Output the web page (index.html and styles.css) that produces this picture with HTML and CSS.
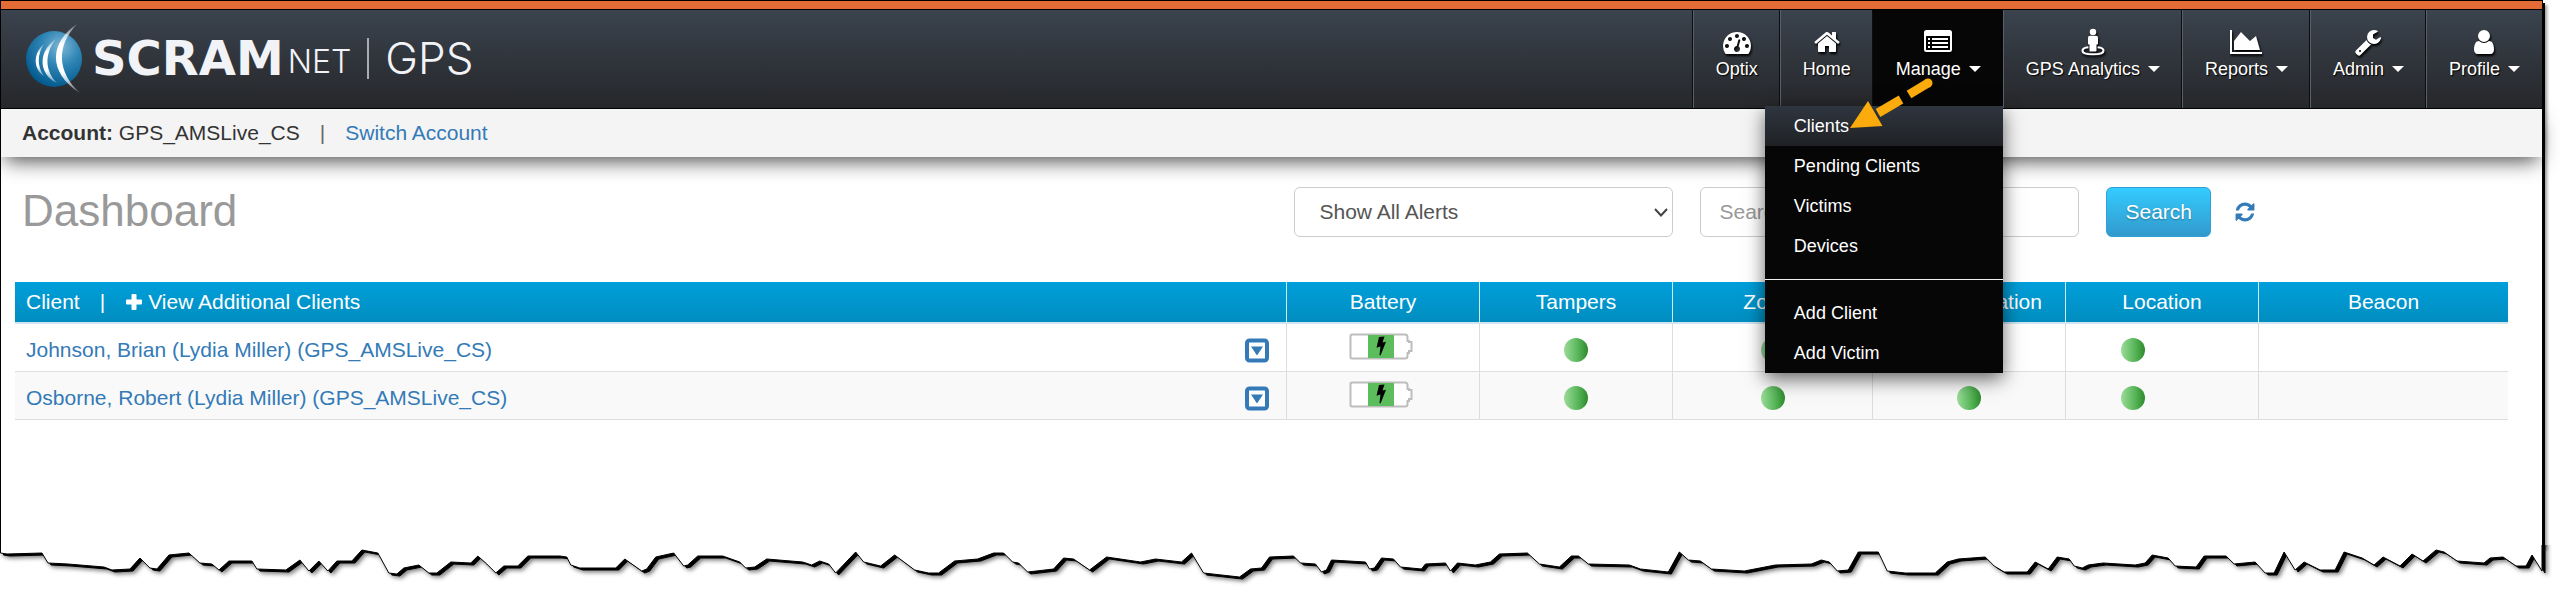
FILE: index.html
```html
<!DOCTYPE html>
<html lang="en">
<head>
<meta charset="utf-8">
<title>SCRAMnet GPS - Dashboard</title>
<link rel="stylesheet" href="styles.css">
</head>
<body>
<svg class="defs" aria-hidden="true">
  <defs>
    <radialGradient id="globe" cx="62%" cy="28%" r="75%">
      <stop offset="0" stop-color="#7fb6d6"/><stop offset=".45" stop-color="#2f86b5"/><stop offset="1" stop-color="#01588c"/>
    </radialGradient>
    <linearGradient id="swoosh" x1="0" y1="0" x2="0" y2="1">
      <stop offset="0" stop-color="#fff" stop-opacity=".3"/><stop offset=".3" stop-color="#fff"/><stop offset=".7" stop-color="#fff"/><stop offset="1" stop-color="#fff" stop-opacity=".3"/>
    </linearGradient>
    <symbol id="battery" viewBox="0 0 64 27">
      <path d="M3 1.500H56Q58.500 1.500 58.500 4V8H60V9H62.500V18H60V20H58.500V23Q58.500 25.500 56 25.500H3Q1.500 25.500 1.500 24V3Q1.500 1.500 3 1.500Z" fill="#fff" stroke="#bdbdbd" stroke-width="2"/>
      <rect x="19" y="2" width="26" height="23" fill="#5bbd5b"/>
      <path d="M30 4L35.500 3.500L33.500 9.500L37 8.800L31.500 22.500L30.500 22L31.500 13.500L27.500 14.800Z" fill="#000"/>
    </symbol>
    <symbol id="expand" viewBox="0 0 24 25">
      <rect x="2" y="2.500" width="20" height="20" rx="2.500" fill="#fff" stroke="#337ab7" stroke-width="4"/>
      <path d="M6 8.500H18L12 17.500Z" fill="#337ab7"/>
    </symbol>
  </defs>
</svg>

<div class="page">
  <div class="accent"></div>
  <header class="topbar">
    <a class="brand" href="#">
      <svg class="brand-mark" width="62" height="72" viewBox="0 0 62 72" aria-hidden="true">
        <circle cx="30" cy="37" r="28" fill="url(#globe)"/>
        <path d="M20 22C9 31 9 47 20 54C13 45 13 32 20 22Z" fill="url(#swoosh)"/>
        <path d="M32 17C14 29 14 52 33 61C21 49 20 32 32 17Z" fill="url(#swoosh)"/>
        <path d="M53 2C26 20 23 50 56 71C33 50 32 24 53 2Z" fill="url(#swoosh)"/>
      </svg>
      <span class="brand-scram">SCRAM</span><span class="brand-net">NET</span>
      <span class="brand-rule"></span>
      <span class="brand-gps">GPS</span>
    </a>
    <nav class="nav">
      <a class="nav-item" href="#">
        <svg class="nav-icon" viewBox="0 0 1792 1792" aria-hidden="true"><path d="M384 1152q0-53-37.500-90.500t-90.500-37.500-90.500 37.500-37.500 90.500 37.500 90.500 90.500 37.500 90.500-37.500 37.500-90.500zm192-448q0-53-37.500-90.500t-90.500-37.500-90.500 37.500-37.500 90.500 37.500 90.500 90.500 37.500 90.500-37.500 37.500-90.500zm428 481l101-382q6-26-7.500-48.500t-38.500-29.500-48 6.500-30 39.500l-101 382q-60 5-107 43.500t-63 98.500q-20 77 20 146t117 89 146-20 89-117q16-60-6-117t-72-91zm660-33q0-53-37.500-90.500t-90.500-37.500-90.500 37.500-37.500 90.500 37.500 90.500 90.500 37.500 90.500-37.500 37.500-90.500zm-640-640q0-53-37.500-90.500t-90.500-37.500-90.500 37.500-37.500 90.500 37.500 90.500 90.500 37.500 90.500-37.500 37.500-90.500zm448 192q0-53-37.500-90.500t-90.500-37.500-90.500 37.500-37.500 90.500 37.500 90.500 90.500 37.500 90.500-37.500 37.500-90.500zm320 448q0 261-141 483-19 29-54 29h-1402q-35 0-54-29-141-221-141-483 0-182 71-348t191-286 286-191 348-71 348 71 286 191 191 286 71 348z"/></svg>
        <span class="nav-label">Optix</span>
      </a>
      <a class="nav-item" href="#">
        <svg class="nav-icon" viewBox="0 0 1792 1792" aria-hidden="true"><path d="M1472 992v480q0 26-19 45t-45 19h-384v-384h-256v384h-384q-26 0-45-19t-19-45v-480q0-1 .5-3t.5-3l575-474 575 474q1 2 1 6zm223-69l-62 74q-8 9-21 11h-3q-13 0-21-7l-692-577-692 577q-12 8-24 7-13-2-21-11l-62-74q-8-10-7-23.500t11-21.500l719-599q32-26 76-26t76 26l244 204v-195q0-14 9-23t23-9h192q14 0 23 9t9 23v408l219 182q10 8 11 21.500t-7 23.500z"/></svg>
        <span class="nav-label">Home</span>
      </a>
      <div class="nav-group">
        <a class="nav-item nav-item-open" href="#" aria-expanded="true">
          <svg class="nav-icon" viewBox="0 0 1792 1792" aria-hidden="true"><path fill-rule="evenodd" d="M160 128H1632Q1792 128 1792 288V1376Q1792 1536 1632 1536H160Q0 1536 0 1376V288Q0 128 160 128ZM160 512Q128 512 128 544V1376Q128 1408 160 1408H1632Q1664 1408 1664 1376V544Q1664 512 1632 512ZM256 640H384V768H256ZM512 640H1536V768H512ZM256 896H384V1024H256ZM512 896H1536V1024H512ZM256 1152H384V1280H256ZM512 1152H1536V1280H512Z"/></svg>
          <span class="nav-label">Manage<i class="caret"></i></span>
        </a>
        <div class="menu">
          <a class="menu-item menu-item-active" href="#">Clients</a>
          <a class="menu-item" href="#">Pending Clients</a>
          <a class="menu-item" href="#">Victims</a>
          <a class="menu-item" href="#">Devices</a>
          <hr class="menu-rule">
          <a class="menu-item" href="#">Add Client</a>
          <a class="menu-item" href="#">Add Victim</a>
        </div>
        <svg class="pointer" width="90" height="56" viewBox="0 0 90 56" aria-hidden="true">
          <path d="M80 8L61 19.500" stroke="#fbab0b" stroke-width="9" fill="none"/>
          <circle cx="80" cy="8" r="4.500" fill="#fbab0b"/>
          <path d="M53 24.500L30 38" stroke="#fbab0b" stroke-width="9" fill="none"/>
          <path d="M2 53L20 26L34.500 51Z" fill="#fbab0b"/>
        </svg>
      </div>
      <a class="nav-item" href="#">
        <svg class="nav-icon" viewBox="0 0 1792 1792" aria-hidden="true"><circle cx="896" cy="256" r="210"/><path d="M700 500H1092Q1216 500 1216 630V1010Q1216 1060 1160 1060H1120V1440Q1120 1500 1060 1500H732Q672 1500 672 1440V1060H632Q576 1060 576 1010V630Q576 500 700 500Z"/><path d="M600 1236C320 1270 224 1350 224 1450C224 1590 500 1680 896 1680S1568 1590 1568 1450C1568 1350 1472 1270 1192 1236" fill="none" stroke="#fff" stroke-width="135"/></svg>
        <span class="nav-label">GPS Analytics<i class="caret"></i></span>
      </a>
      <a class="nav-item" href="#">
        <svg class="nav-icon nav-icon-wide" viewBox="0 0 2048 1792" aria-hidden="true"><path d="M2048 1536v128h-2048v-1536h128v1408h1920zm-384-1024l256 896h-1664v-576l448-576 576 576z"/></svg>
        <span class="nav-label">Reports<i class="caret"></i></span>
      </a>
      <a class="nav-item" href="#">
        <svg class="nav-icon" viewBox="0 0 1792 1792" aria-hidden="true"><path d="M448 1472q0-26-19-45t-45-19-45 19-19 45 19 45 45 19 45-19 19-45zm644-420l-682 682q-37 37-90 37-52 0-91-37l-106-108q-38-36-38-90 0-53 38-91l681-681q39 98 114.500 173.500t173.500 114.500zm634-435q0 39-23 106-47 134-164.500 217.500t-258.500 83.500q-185 0-316.500-131.500t-131.500-316.500 131.500-316.500 316.500-131.500q58 0 121.500 16.500t107.500 46.500q16 11 16 28t-16 28l-293 169v224l193 107q5-3 79-48.500t135.500-81 70.500-35.500q15 0 23.500 10t8.500 25z"/></svg>
        <span class="nav-label">Admin<i class="caret"></i></span>
      </a>
      <a class="nav-item" href="#">
        <svg class="nav-icon" viewBox="0 0 1792 1792" aria-hidden="true"><path d="M1536 1399q0 109-62.500 187t-150.500 78h-854q-88 0-150.500-78t-62.500-187q0-85 8.500-160.500t31.500-152 58.500-131 94-89 134.500-34.500q131 128 313 128t313-128q76 0 134.500 34.500t94 89 58.500 131 31.500 152 8.500 160.500zm-256-887q0 159-112.500 271.500t-271.500 112.500-271.500-112.500-112.500-271.500 112.500-271.500 271.500-112.500 271.500 112.500 112.500 271.500z"/></svg>
        <span class="nav-label">Profile<i class="caret"></i></span>
      </a>
    </nav>
  </header>

  <div class="account">
    <span><b>Account:</b> GPS_AMSLive_CS</span>
    <span class="account-sep">|</span>
    <a class="link" href="#">Switch Account</a>
  </div>

  <main class="main">
    <div class="tools">
      <h1 class="title">Dashboard</h1>
      <div class="select-box">
        <select class="field select" aria-label="Alert filter"><option>Show All Alerts</option></select>
        <svg class="chevron" width="14" height="9" viewBox="0 0 14 9" aria-hidden="true"><path d="M1 1L7 7.500L13 1" fill="none" stroke="#444" stroke-width="2"/></svg>
      </div>
      <input class="field" type="text" placeholder="Search" aria-label="Search clients">
      <button class="search" type="button">Search</button>
      <a class="refresh" href="#" aria-label="Refresh"><svg width="22" height="22" viewBox="0 0 1792 1792" aria-hidden="true"><path fill="#337ab7" d="M1639 1056q0 5-1 7-64 268-268 434.500t-478 166.500q-146 0-282.500-55t-243.500-157l-129 129q-19 19-45 19t-45-19-19-45v-448q0-26 19-45t45-19h448q26 0 45 19t19 45-19 45l-137 137q71 66 161 102t187 36q134 0 250-65t186-179q11-17 53-117 8-23 30-23h192q13 0 22.500 9.500t9.500 22.500zm25-800v448q0 26-19 45t-45 19h-448q-26 0-45-19t-19-45 19-45l138-138q-148-137-349-137-134 0-250 65t-186 179q-11 17-53 117-8 23-30 23h-199q-13 0-22.500-9.500t-9.500-22.500v-7q65-268 270-434.500t480-166.500q146 0 284 55.500t245 156.500l130-129q19-19 45-19t45 19 19 45z"/></svg></a>
    </div>

    <table class="grid">
      <colgroup><col><col class="c-std"><col class="c-std"><col class="c-comm"><col class="c-std"><col class="c-std"><col class="c-beacon"></colgroup>
      <thead>
        <tr>
          <th class="client" scope="col"><div class="client-head"><span>Client</span><span>|</span><a class="add" href="#"><svg width="18" height="18" viewBox="0 0 18 18" aria-hidden="true"><path d="M7.500 1H10.500Q11.500 1 11.500 2V6.500H16Q17 6.500 17 7.500V10.500Q17 11.500 16 11.500H11.500V16Q11.500 17 10.500 17H7.500Q6.500 17 6.500 16V11.500H2Q1 11.500 1 10.500V7.500Q1 6.500 2 6.500H6.500V2Q6.500 1 7.500 1Z" fill="#fff"/></svg>View Additional Clients</a></div></th>
          <th scope="col">Battery</th><th scope="col">Tampers</th><th scope="col">Zones</th><th scope="col">Communication</th><th scope="col">Location</th><th scope="col">Beacon</th>
        </tr>
      </thead>
      <tbody>
        <tr>
          <td class="client"><div class="client-cell"><a class="link" href="#">Johnson, Brian (Lydia Miller) (GPS_AMSLive_CS)</a><button class="expand" type="button" aria-label="Show details"><svg width="24" height="25"><use href="#expand"/></svg></button></div></td>
          <td class="battery"><svg width="64" height="27"><use href="#battery"/></svg></td>
          <td><span class="dot"></span></td><td><span class="dot"></span></td><td><span class="dot"></span></td><td class="location"><span class="dot"></span></td><td></td>
        </tr>
        <tr>
          <td class="client"><div class="client-cell"><a class="link" href="#">Osborne, Robert (Lydia Miller) (GPS_AMSLive_CS)</a><button class="expand" type="button" aria-label="Show details"><svg width="24" height="25"><use href="#expand"/></svg></button></div></td>
          <td class="battery"><svg width="64" height="27"><use href="#battery"/></svg></td>
          <td><span class="dot"></span></td><td><span class="dot"></span></td><td><span class="dot"></span></td><td class="location"><span class="dot"></span></td><td></td>
        </tr>
      </tbody>
    </table>
  </main>
</div>
<svg class="torn" viewBox="0 0 2544 45" preserveAspectRatio="none" aria-hidden="true">
  <path class="torn-edge" d="M.5 -14V8L7 9L42 8L48 18L68 19L104 22L112 25L130 24L140 13L150 23L157 24L169 10L189 8L200 18L212 19L219 25L229 16L252 16L257 24L286 25L300 15L309 26L319 16L328 26L337 16L352 16L362 5L378 8L389 28L397 29L404 23L419 20L429 28L437 28L451 17L471 18L478 11L487 19L496 28L504 21L518 21L528 11L560 11L567 12L571 20L580 23L616 23L625 14L642 26L647 24L656 12L674 8L684 21L688 20L698 11L723 11L740 17L746 23L755 22L767 14L803 17L812 20L820 16L829 19L836 28L856 7L864 17L881 21L895 10L915 25L929 28L939 28L955 16L978 14L994 8L1004 8L1013 17L1019 18L1028 27L1054 24L1064 13L1074 14L1090 25L1107 12L1141 17L1156 14L1182 17L1192 8L1204 28L1240 32L1251 24L1262 23L1270 12L1294 11L1301 18L1316 19L1322 27L1327 25L1332 15L1366 17L1370 24L1375 23L1382 13L1394 14L1401 22L1422 24L1426 19L1446 18L1451 26L1458 18L1476 20L1491 17L1500 9L1528 8L1540 19L1560 22L1572 11L1579 11L1589 19L1630 20L1641 24L1669 27L1680 7L1689 15L1701 16L1712 24L1745 26L1776 20L1812 19L1822 15L1830 17L1838 26L1849 25L1859 7L1879 7L1888 26L1906 28L1936 28L1948 17L1959 14L1986 12L1995 21L2005 27L2028 27L2036 17L2049 24L2058 12L2070 14L2075 21L2083 23L2089 20L2104 18L2136 20L2146 18L2153 10L2169 13L2176 21L2197 22L2205 11L2227 11L2235 19L2256 17L2266 28L2275 28L2285 7L2296 25L2305 17L2321 25L2336 25L2345 7L2363 13L2375 20L2384 12L2401 21L2413 9L2424 16L2437 5L2445 7L2458 16L2485 18L2491 13L2504 12L2517 21L2527 21L2533 10L2543 26V-14"/>
</svg>
</body>
</html>
```
FILE: styles.css
```css
* { box-sizing: border-box; }

body {
  margin: 0;
  padding: 0 17px 8px 0;
  min-height: 100vh;
  display: flex;
  flex-direction: column;
  background: #fff;
  color: #333;
  font: 21px/24px "Liberation Sans", Arial, sans-serif;
}

a { color: inherit; text-decoration: none; }
.link { color: #337ab7; }
.defs { position: absolute; width: 0; height: 0; }

.page {
  flex: 1;
  border: 1px solid #000;
  border-bottom: 0;
  box-shadow: 2px 3px 0 #000, 4px 5px 3px rgba(0, 0, 0, .4);
  background: #fff;
}

.accent { height: 9px; background: #e36c36; border-bottom: 1px solid #000; }

/* Header */
.topbar {
  position: relative;
  z-index: 2;
  display: flex;
  justify-content: space-between;
  height: 99px;
  border-bottom: 1px solid #000;
  background: linear-gradient(#3a434e, #26272a);
}

.brand { display: flex; align-items: center; padding: 0 0 2px 23px; color: #f2f3f6; line-height: 48px; font-family: Inter, sans-serif; }
.brand-mark { margin-right: 6px; }
.brand-scram { font-family: "DejaVu Sans", sans-serif; font-size: 48px; font-weight: 700; }
.brand-net { font-size: 32px; font-weight: 300; padding: 8px 0 0 4px; }
.brand-rule { width: 2px; height: 41px; margin: 0 16px; background: #a9adb3; }
.brand-gps { font-size: 44px; font-weight: 300; }

.nav { display: flex; }
.nav-group { position: relative; display: flex; }
.nav-item {
  display: flex;
  flex-direction: column;
  align-items: center;
  gap: 3px;
  padding: 18px 22px 0;
  border-left: 1px solid #5a6069;
  box-shadow: -1px 0 0 #0c0d0f;
  color: #fff;
  font-size: 18px;
  line-height: 20px;
  text-shadow: 1px 1px 1px #000;
}
.nav-item-open { background: #060606; border-color: #060606; }
.nav-icon { width: 28px; height: 28px; fill: #fff; overflow: visible; filter: drop-shadow(1px 2px 1px #000); }
.nav-icon-wide { width: 32px; }
.nav-label { display: flex; align-items: center; gap: 8px; }
.caret { border: 6px solid transparent; border-top-color: #fff; border-bottom: 0; }

.menu {
  position: absolute;
  top: 96px;
  right: 0;
  width: 238px;
  background: #060606;
  box-shadow: 0 6px 18px rgba(0, 0, 0, .6);
}
.menu-item { display: block; padding: 0 29px; color: #fff; font-size: 18px; line-height: 40px; }
.menu-item-active { background: linear-gradient(#2f3640, #1f2124); }
.menu-rule { margin: 13px 0; border: 0; height: 1px; background: #f0f0f0; }
.pointer { position: absolute; top: 65px; right: 65px; }

/* Account strip */
.account {
  position: relative;
  display: flex;
  height: 48px;
  align-items: center;
  padding: 0 21px;
  background: #f4f4f4;
  box-shadow: 0 8px 20px -4px rgba(0, 0, 0, .7);
}
.account-sep { padding: 0 20px; color: #666; }

/* Dashboard */
.main { padding: 30px 34px 0 14px; }
.tools { display: flex; align-items: center; gap: 27px; padding-right: 252px; margin-bottom: 45px; }
.title { flex: 1; margin: 0 0 0 7px; padding-bottom: 2px; color: #999; font-size: 44px; line-height: 48px; font-weight: 400; }
.field {
  width: 379px;
  height: 50px;
  padding: 0 18px;
  border: 1px solid #ccc;
  border-radius: 6px;
  background: #fff;
  color: #555;
  font: inherit;
}
.field::placeholder { color: #999; opacity: 1; }
.select-box { position: relative; }
.select { display: block; padding: 0 24px; appearance: none; }
.chevron { position: absolute; right: 5px; top: 21px; pointer-events: none; }
.search {
  height: 50px;
  padding: 0 18px;
  border: 1px solid #2f9fd6;
  border-radius: 6px;
  background: linear-gradient(#33ccff, #3399cc);
  color: #fff;
  font: inherit;
  text-shadow: 0 1px 2px rgba(0, 0, 0, .3);
}
.refresh { display: flex; margin-left: -4px; }

.grid { width: 100%; table-layout: fixed; border-collapse: separate; border-spacing: 0; }
.c-std { width: 193px; }
.c-comm { width: 200px; }
.c-beacon { width: 250px; }
.grid th {
  height: 42px;
  padding: 0;
  border-left: 1px solid #cfe9f5;
  border-bottom: 2px solid #cfe6f0;
  background: linear-gradient(#009fdb, #018dbf);
  color: #fff;
  font-weight: 400;
}
.grid .client { padding: 0 17px 0 11px; border-left: 0; text-align: left; }
.client-head { display: flex; gap: 20px; }
.add { display: flex; align-items: center; gap: 5px; }
.grid td {
  height: 48px;
  padding: 4px 0 0;
  border-left: 1px solid #ddd;
  border-bottom: 1px solid #ddd;
  text-align: center;
}
.grid tbody tr:nth-child(even) td { background: #f9f9f9; }
.client-cell { display: flex; justify-content: space-between; align-items: center; padding-top: 5px; }
.expand { display: flex; padding: 0; border: 0; background: none; }
.grid svg { display: block; }
.grid .battery { padding: 0 4px 3px 0; }
.battery svg { margin: 0 auto; }
.dot {
  display: block;
  width: 24px;
  height: 24px;
  margin: 0 auto;
  border-radius: 50%;
  background: linear-gradient(90deg, #9bdc9b, #5cb85c 55%, #2c8a2c);
}
.grid .location { padding-right: 58px; }

/* Torn lower edge of the sheet */
.torn {
  position: relative;
  display: block;
  width: 100%;
  height: 45px;
  overflow: visible;
  clip-path: inset(0 -12px -8px 0);
  filter: drop-shadow(3px 2px 0 #000) drop-shadow(2px 2px 2px rgba(0, 0, 0, .5));
}
.torn-edge { fill: #fff; stroke: #000; stroke-width: 1; }
```
